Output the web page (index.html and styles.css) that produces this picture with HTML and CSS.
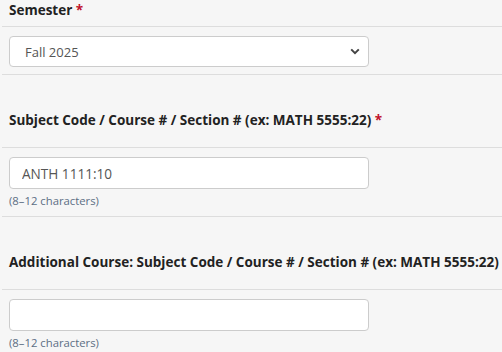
FILE: index.html
```html
<!DOCTYPE html>
<html lang="en">
<head>
<meta charset="utf-8">
<link rel="stylesheet" href="styles.css">
</head>
<body>
<form class="form">
  <div class="row label-row first">
    <label class="label">Semester <span class="req">*</span></label>
  </div>
  <div class="row field-row">
    <div class="select-wrap">
      <select class="control select">
        <option>Fall 2025</option>
      </select>
      <svg class="chev" width="10" height="7" viewBox="0 0 10 7"><path d="M1.2 1.4 L5 5.2 L8.8 1.4" fill="none" stroke="#444" stroke-width="2"/></svg>
    </div>
  </div>
  <div class="row label-row">
    <label class="label">Subject Code / Course # / Section # (ex: MATH 5555:22) <span class="req">*</span></label>
  </div>
  <div class="row field-row">
    <input class="control text" type="text" value="ANTH 1111:10">
    <div class="help">(8–12 characters)</div>
  </div>
  <div class="row label-row">
    <label class="label">Additional Course: Subject Code / Course # / Section # (ex: MATH 5555:22)</label>
  </div>
  <div class="row field-row">
    <input class="control text" type="text" value="">
    <div class="help">(8–12 characters)</div>
  </div>
</form>
</body>
</html>
```
FILE: styles.css
```css
html, body {
  margin: 0;
  padding: 0;
  background: #f6f6f6;
}
body {
  font-family: "Open Sans", "Noto Sans", sans-serif;
  color: #222;
  overflow: hidden;
}
.form {
  margin-left: 2px;
}
.row {
  padding: 0 7px;
  border-bottom: 1px solid #dddddd;
}
.label-row {
  padding-top: 35px;
  padding-bottom: 17px;
}
.label-row.first {
  padding-top: 0;
  padding-bottom: 6px;
}
.label {
  display: block;
  font-size: 13.5px;
  font-weight: 700;
  line-height: 20px;
  color: #222;
  white-space: nowrap;
}
.req {
  color: #c0102a;
}
.field-row {
  padding-top: 9px;
  padding-bottom: 7px;
}
.select-wrap {
  position: relative;
  width: 360px;
}
.control {
  box-sizing: border-box;
  display: block;
  width: 360px;
  height: 31px;
  margin: 0;
  padding: 0 12px;
  border: 1px solid #cccccc;
  border-radius: 4px;
  background: #fff;
  font-family: "Open Sans", "Noto Sans", sans-serif;
  font-size: 13px;
  color: #555;
  outline: none;
}
.text {
  height: 32px;
  font-size: 13.6px;
}
.select {
  appearance: none;
  -webkit-appearance: none;
  padding-left: 15px;
}
.chev {
  position: absolute;
  right: 9px;
  top: 12px;
}
.help {
  font-size: 11.3px;
  line-height: 14px;
  padding-top: 5px;
  padding-bottom: 1px;
  color: #5c6e84;
}
```
